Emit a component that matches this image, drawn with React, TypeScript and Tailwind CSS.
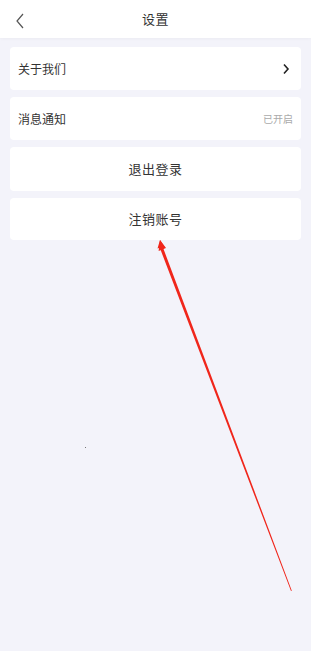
import React from "react";

const font = { fontFamily: '"Noto Sans CJK SC", "Noto Sans", sans-serif' };

export default function App() {
  return (
    <div className="relative w-[311px] h-[651px] bg-[#f3f3fa] overflow-hidden" style={font}>
      <div className="relative h-[38px] bg-white flex items-center justify-center shadow-[0_1px_3px_rgba(0,0,0,0.03)]">
        <svg className="absolute left-[15px] top-[13px]" width="10" height="16" viewBox="0 0 10 16">
          <path d="M8 1 L2 8 L8 15" fill="none" stroke="#555" strokeWidth="1.2" />
        </svg>
        <span className="text-[13px] text-[#333] tracking-[0.5px]">设置</span>
      </div>
      <div className="flex flex-col gap-[7px] px-[10px] pt-[9px]">
        <div className="h-[43px] bg-white rounded-[4px] flex items-center justify-between pl-[8px] pr-[11px]">
          <span className="text-[12px] text-[#333]">关于我们</span>
          <svg width="8" height="12" viewBox="0 0 8 12">
            <path d="M2 1.5 L6 6 L2 10.5" fill="none" stroke="#222" strokeWidth="1.6" />
          </svg>
        </div>
        <div className="h-[43px] bg-white rounded-[4px] flex items-center justify-between pl-[8px] pr-[8px]">
          <span className="text-[12px] text-[#333]">消息通知</span>
          <span className="text-[10px] text-[#aaa]">已开启</span>
        </div>
        <div className="h-[44px] bg-white rounded-[4px] flex items-center justify-center">
          <span className="text-[13px] text-[#333] tracking-[0.5px]">退出登录</span>
        </div>
        <div className="h-[42px] bg-white rounded-[4px] flex items-center justify-center">
          <span className="text-[13px] text-[#333] tracking-[0.5px]">注销账号</span>
        </div>
      </div>
      <div className="absolute left-[85px] top-[447px] w-[1px] h-[1px] bg-[#777]" />
      <svg className="absolute left-0 top-0" width="311" height="651" viewBox="0 0 311 651">
        <polygon points="160,240 157.5,248.5 159.8,247.8 291,591 291.8,590.7 162.6,246.6 165,247.5" fill="#f0261b" />
        <polygon points="160,240 158.6,251 166,248" fill="#f0261b" />
      </svg>
    </div>
  );
}
